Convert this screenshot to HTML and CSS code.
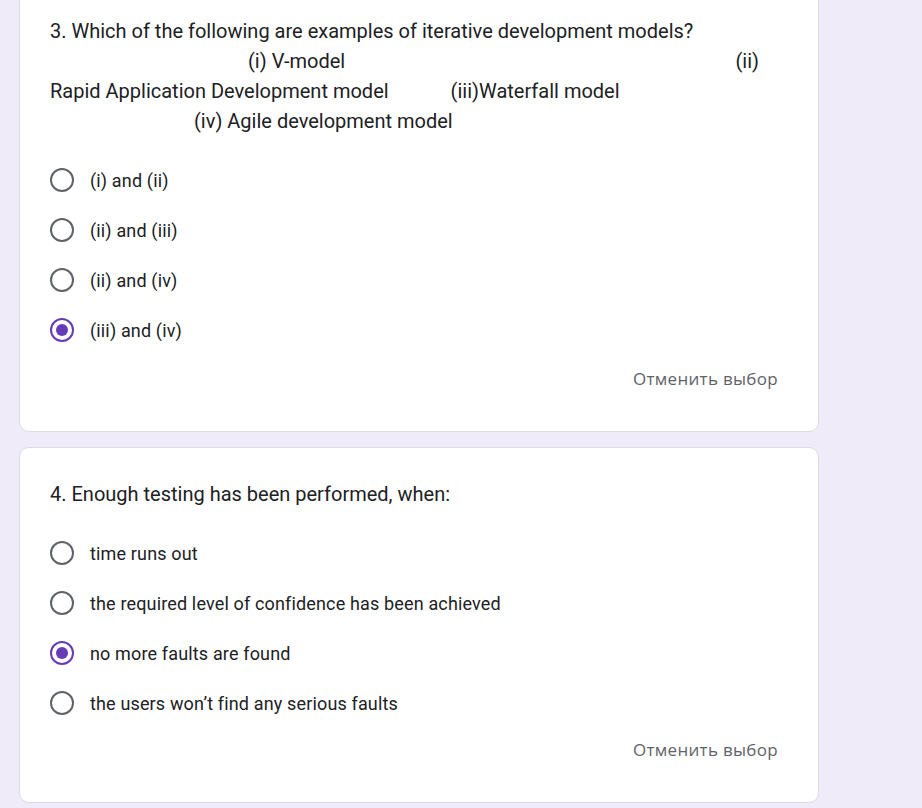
FILE: index.html
```html
<!DOCTYPE html>
<html>
<head>
<meta charset="utf-8">
<link rel="stylesheet" href="styles.css">
</head>
<body>
<div class="page">
  <div class="card card-first">
    <div class="title">
      <div class="line">3. Which of the following are examples of iterative development models?</div>
      <div class="line line-split"><span class="i1">(i) V-model</span><span class="i2">(ii)</span></div>
      <div class="line"><span>Rapid Application Development model</span><span class="i3">(iii)Waterfall model</span></div>
      <div class="line"><span class="i4">(iv) Agile development model</span></div>
    </div>
    <div class="options">
      <div class="opt"><span class="radio"></span><span class="label">(i) and (ii)</span></div>
      <div class="opt"><span class="radio"></span><span class="label">(ii) and (iii)</span></div>
      <div class="opt"><span class="radio"></span><span class="label">(ii) and (iv)</span></div>
      <div class="opt"><span class="radio checked"></span><span class="label">(iii) and (iv)</span></div>
    </div>
    <div class="actions"><span class="clear">Отменить выбор</span></div>
  </div>
  <div class="card card-second">
    <div class="title">
      <div class="line">4. Enough testing has been performed, when:</div>
    </div>
    <div class="options">
      <div class="opt"><span class="radio"></span><span class="label">time runs out</span></div>
      <div class="opt"><span class="radio"></span><span class="label">the required level of confidence has been achieved</span></div>
      <div class="opt"><span class="radio checked"></span><span class="label">no more faults are found</span></div>
      <div class="opt"><span class="radio"></span><span class="label">the users won’t find any serious faults</span></div>
    </div>
    <div class="actions actions-tight"><span class="clear">Отменить выбор</span></div>
  </div>
</div>
</body>
</html>
```
FILE: styles.css
```css
* { box-sizing: border-box; }
html, body {
  margin: 0;
  padding: 0;
  background: #f0ebf8;
  font-family: Roboto, "Liberation Sans", sans-serif;
  color: #202124;
}
.page {
  display: flex;
  flex-direction: column;
  gap: 15px;
  padding-left: 19px;
  margin-top: -15px;
}
.card {
  width: 800px;
  background: #fff;
  border: 1px solid #dadce0;
  border-radius: 10px;
  padding: 30px 29px 30px 30px;
}
.card-second { padding-top: 31px; padding-bottom: 32px; }
.title {
  font-size: 20px;
  line-height: 30px;
}
.line { white-space: nowrap; }
.line-split { display: flex; }
.i1 { margin-left: 198px; }
.i2 { margin-left: auto; margin-right: 30px; }
.i3 { margin-left: 62px; }
.i4 { margin-left: 144px; }
.options {
  margin-top: 19px;
  display: flex;
  flex-direction: column;
}
.opt {
  height: 50px;
  display: flex;
  align-items: center;
  gap: 16px;
}
.radio {
  width: 24px;
  height: 24px;
  border: 2.5px solid #5f6368;
  border-radius: 50%;
  display: flex;
  align-items: center;
  justify-content: center;
  flex: none;
}
.radio.checked { border-color: #673ab7; }
.radio.checked::after {
  content: "";
  width: 12px;
  height: 12px;
  border-radius: 50%;
  background: #673ab7;
}
.label {
  font-size: 18px;
  letter-spacing: 0.15px;
}
.actions {
  height: 46px;
  display: flex;
  align-items: center;
  justify-content: flex-end;
  padding-right: 11px;
}
.actions-tight { height: 42px; }
.clear {
  font-family: "Open Sans", sans-serif;
  font-weight: 500;
  font-size: 17px;
  color: #5f6368;
  letter-spacing: 0.3px;
}
```
